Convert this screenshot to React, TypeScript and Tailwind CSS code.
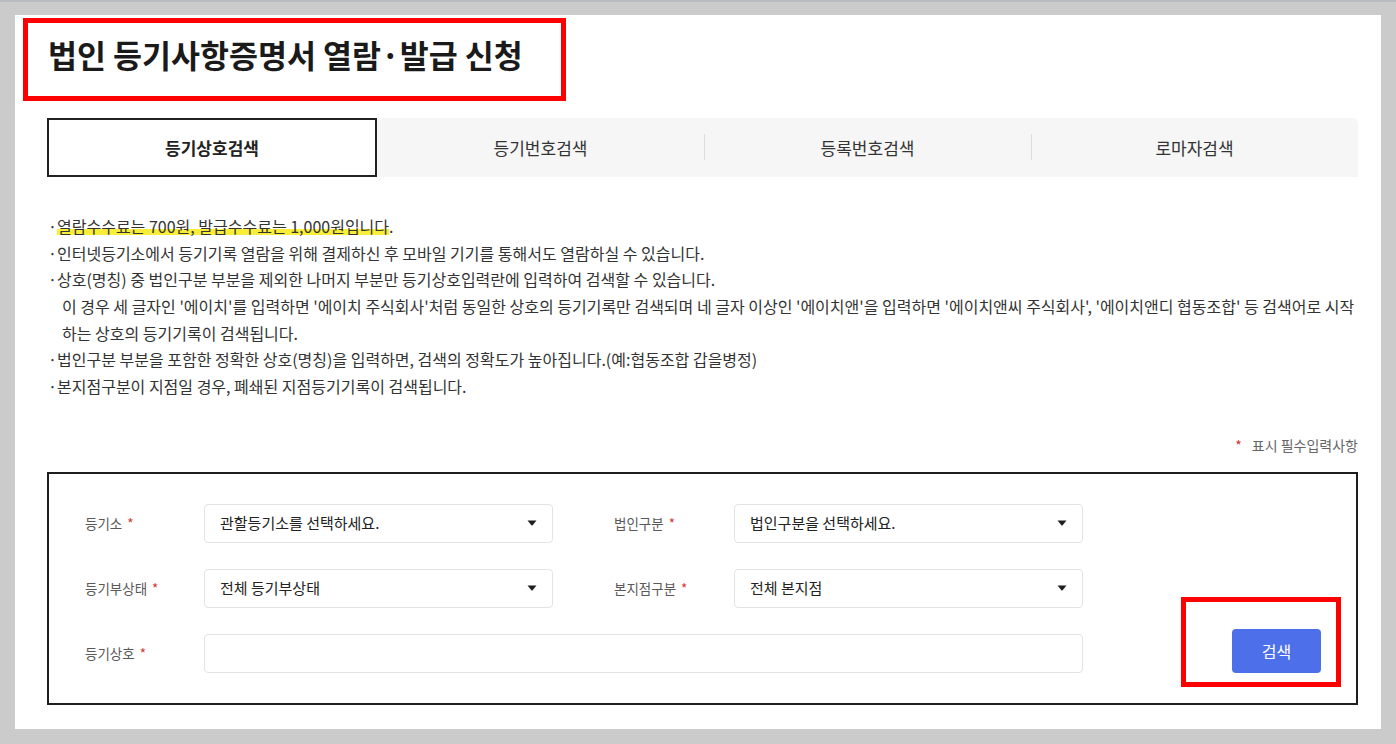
import React from 'react';

const tabs = ['등기상호검색', '등기번호검색', '등록번호검색', '로마자검색'];

function Caret() {
  return (
    <svg width="10" height="6" viewBox="0 0 10 6" className="shrink-0">
      <path d="M0.5 0.5 H9.5 L5.6 5.3 Q5 5.9 4.4 5.3 Z" fill="#1f1f1f" />
    </svg>
  );
}

function Label({ text }: { text: string }) {
  return (
    <div className="flex items-center text-[13.5px] text-[#595959]">
      {text}
      <span className="ml-[5px] text-[#d32f2f]">*</span>
    </div>
  );
}

function SelectBox({ value }: { value: string }) {
  return (
    <div className="h-[39px] rounded-[4px] border border-[#e3e3e3] flex items-center justify-between pl-[15px] pr-[15px] text-[15px] text-[#222]">
      <span>{value}</span>
      <Caret />
    </div>
  );
}

export default function App() {
  return (
    <div className="h-[744px] overflow-hidden bg-[#cbcbcb] font-['Noto_Sans_CJK_KR','Noto_Sans',sans-serif]">
      <div className="h-[2px] bg-[#b9bdc1]" />
      <div className="px-[15px] pt-[13px]">
        <div className="h-[714px] bg-white pl-[8px] pr-[23px] pt-[3px]">
          {/* title (annotated) */}
          <div className="box-border w-[543px] h-[83px] border-[5px] border-[#ff0000] pl-[20px] pt-[15px]">
            <h1 className="text-[31.5px] leading-[32px] font-bold text-[#1a1a1a]">
              법인 등기사항증명서 열람·발급 신청
            </h1>
          </div>

          <div className="pl-[24px]">
            {/* tabs */}
            <div className="mt-[17px] h-[59px] bg-[#f6f6f6] rounded-tr-[6px] grid grid-cols-[330px_1fr_1fr_1fr]">
              {tabs.map((t, i) => (
                <div
                  key={t}
                  className={`relative flex items-center justify-center text-[17px] ${
                    i === 0 ? 'bg-white border-2 border-[#222] font-bold text-[#222]' : 'text-[#333]'
                  }`}
                >
                  {i > 1 && <span className="absolute left-0 top-[16px] h-[26px] w-px bg-[#dddddd]" />}
                  {t}
                </div>
              ))}
            </div>

            {/* notices */}
            <div className="mt-[36px] text-[16px] leading-[26.67px] text-[#333]">
              <div className="flex">
                <span className="w-[10px] pl-[1px]">·</span>
                <span className="bg-[linear-gradient(to_bottom,transparent_60%,#f8ee3a_60%,#f8ee3a_82%,transparent_82%)]">
                  열람수수료는 700원, 발급수수료는 1,000원입니다
                </span>
                .
              </div>
              <div className="flex">
                <span className="w-[10px] pl-[1px]">·</span>
                <span>인터넷등기소에서 등기기록 열람을 위해 결제하신 후 모바일 기기를 통해서도 열람하실 수 있습니다.</span>
              </div>
              <div className="flex">
                <span className="w-[10px] pl-[1px]">·</span>
                <span>상호(명칭) 중 법인구분 부분을 제외한 나머지 부분만 등기상호입력란에 입력하여 검색할 수 있습니다.</span>
              </div>
              <div className="pl-[15px] whitespace-nowrap">
                이 경우 세 글자인 '에이치'를 입력하면 '에이치 주식회사'처럼 동일한 상호의 등기기록만 검색되며 네 글자 이상인 '에이치앤'을 입력하면 '에이치앤씨 주식회사', '에이치앤디 협동조합' 등 검색어로 시작
                <br />
                하는 상호의 등기기록이 검색됩니다.
              </div>
              <div className="flex">
                <span className="w-[10px] pl-[1px]">·</span>
                <span>법인구분 부분을 포함한 정확한 상호(명칭)을 입력하면, 검색의 정확도가 높아집니다.(예:협동조합 갑을병정)</span>
              </div>
              <div className="flex">
                <span className="w-[10px] pl-[1px]">·</span>
                <span>본지점구분이 지점일 경우, 폐쇄된 지점등기기록이 검색됩니다.</span>
              </div>
            </div>

            {/* required note */}
            <div className="mt-[35px] flex justify-end items-center text-[14px] leading-[20px] text-[#666]">
              <span className="text-[#d32f2f] mr-[10px]">*</span>
              표시 필수입력사항
            </div>

            {/* form */}
            <div className="mt-[17px] border-2 border-[#1e1e1e] pl-[36px] pr-[35px] py-[30px] flex justify-between items-end">
              <div className="grid grid-cols-[119px_349px_61px_120px_349px] gap-y-[26px]">
                <Label text="등기소" />
                <SelectBox value="관할등기소를 선택하세요." />
                <div />
                <Label text="법인구분" />
                <SelectBox value="법인구분을 선택하세요." />

                <Label text="등기부상태" />
                <SelectBox value="전체 등기부상태" />
                <div />
                <Label text="본지점구분" />
                <SelectBox value="전체 본지점" />

                <Label text="등기상호" />
                <div className="col-span-4 h-[39px] rounded-[4px] border border-[#e3e3e3]" />
              </div>

              <div className="relative">
                <span className="pointer-events-none absolute -left-[51px] -top-[32px] -right-[20px] -bottom-[14px] border-[5px] border-[#ff0000]" />
                <button className="w-[89px] h-[44px] rounded-[4px] bg-[#4d70ea] text-white text-[16px]">검색</button>
              </div>
            </div>
          </div>
        </div>
      </div>
    </div>
  );
}
